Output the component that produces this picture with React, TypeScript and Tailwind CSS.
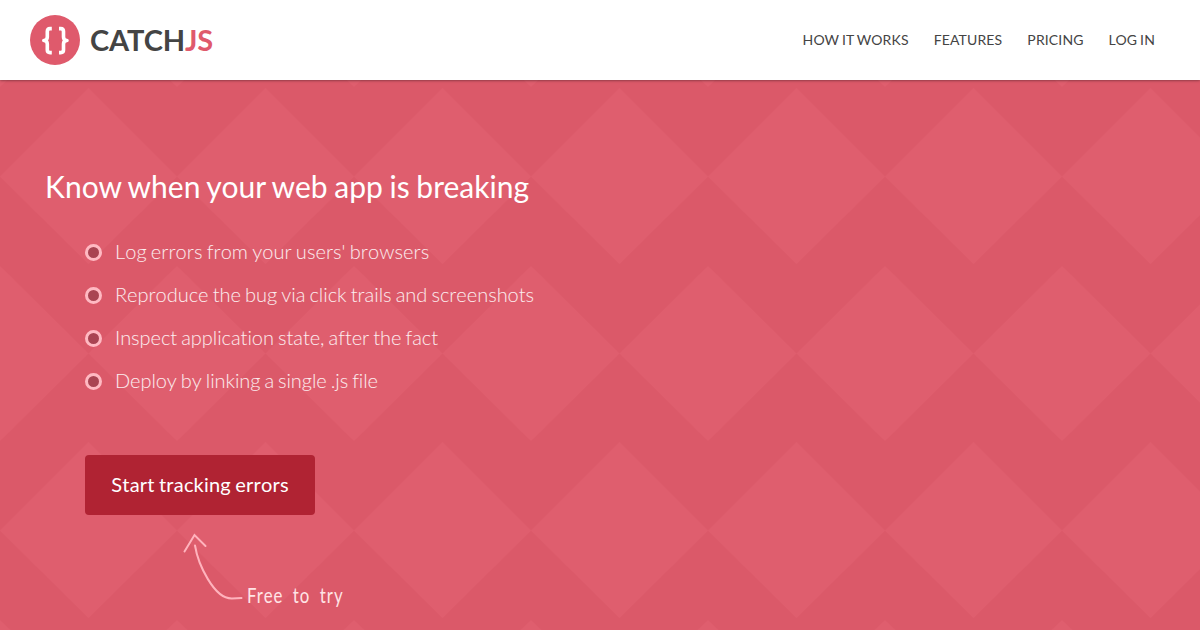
import React from 'react';

const navItems = ['How it works', 'Features', 'Pricing', 'Log in'];

const features = [
  { text: "Log errors from your users' browsers", tracking: 'tracking-[0.055px]' },
  { text: 'Reproduce the bug via click trails and screenshots', tracking: 'tracking-[-0.02px]' },
  { text: 'Inspect application state, after the fact', tracking: 'tracking-[-0.045px]' },
  { text: 'Deploy by linking a single .js file', tracking: 'tracking-[-0.075px]' },
];

function Logo() {
  return (
    <a className="flex items-center" href="#">
      <svg width="50" height="50" viewBox="0 0 50 50" aria-hidden="true">
        <circle cx="25" cy="25" r="25" fill="#df5a6c" />
        <g fill="none" stroke="#fff" strokeWidth="3.6" strokeLinejoin="round">
          <path d="M21.8 13.6H20Q17.3 13.6 17.3 16.5V22Q17.3 25.5 13.8 25.5Q17.3 25.5 17.3 29V35Q17.3 37.6 20 37.6H21.8" />
          <path d="M29 13.6H30.8Q33.5 13.6 33.5 16.5V22Q33.5 25.5 37 25.5Q33.5 25.5 33.5 29V35Q33.5 37.6 30.8 37.6H29" />
        </g>
      </svg>
      <span className="ml-2.5 pb-px text-[29px] leading-[49px] font-bold tracking-[-0.1px] text-[#444]">
        CATCH<span className="text-[#df5a6c]">JS</span>
      </span>
    </a>
  );
}

function Header() {
  return (
    <header className="relative z-10 flex h-20 items-center justify-between bg-white pr-[45px] pl-[30px] shadow-[0_0_3px_rgba(0,0,0,0.6)]">
      <Logo />
      <nav className="flex gap-[25px] tracking-[0.14px] [word-spacing:-0.8px]">
        {navItems.map((item) => (
          <a key={item} href="#" className="text-sm text-[#444] uppercase">
            {item}
          </a>
        ))}
      </nav>
    </header>
  );
}

function DiamondBackground() {
  return (
    <svg className="absolute inset-0 h-full w-full" aria-hidden="true">
      <defs>
        <pattern id="diamonds" width="177" height="354" patternUnits="userSpaceOnUse" y="8">
          <g fill="#df5e6e">
            <path d="M88.5 0L177 88.5L88.5 176L0 88.5Z" />
            <path d="M0 178L88.5 265.5L0 353L-88.5 265.5Z" />
            <path d="M177 178L265.5 265.5L177 353L88.5 265.5Z" />
          </g>
        </pattern>
      </defs>
      <rect width="100%" height="100%" fill="url(#diamonds)" />
    </svg>
  );
}

function Hero() {
  return (
    <section className="relative h-[550px] bg-[#db5969]">
      <DiamondBackground />
      <div className="relative pt-[84px] pl-[45px] text-white">
        <h1 className="text-[30px] leading-[44px] tracking-[0.03px] [font-variant-ligatures:none] [word-spacing:-1.1px]">
          Know when your web app is breaking
        </h1>
        <ul className="mt-[21px] ml-10 [font-kerning:none] [font-variant-ligatures:none] [word-spacing:-1.3px]">
          {features.map(({ text, tracking }) => (
            <li key={text} className={`flex h-[43px] items-center text-xl font-light text-white/90 ${tracking}`}>
              <span className="mt-[3px] mr-[13px] h-[17px] w-[17px] rounded-full border-[3px] border-[#ffb9c2] bg-[#a94452]" />
              {text}
            </li>
          ))}
        </ul>
        <a
          href="#"
          className="mt-[54px] ml-10 flex h-[60px] w-[230px] items-center justify-center rounded bg-[#b02333] pb-0.5 text-xl tracking-[0.19px] [font-kerning:none] [word-spacing:-1px]"
        >
          Start tracking errors
        </a>
        <div className="mt-[17px] ml-[137px] flex">
          <svg width="62" height="70" viewBox="0 0 62 70" fill="none" stroke="#ffb3bd" strokeWidth="2" strokeLinecap="round" aria-hidden="true">
            <path d="M2.5 19.5L12.5 3L23.5 14" />
            <path d="M13 13.5C16 32 32 67 50 66.5L59.5 66" />
          </svg>
          <span className="mt-[49px] ml-[3px] origin-left scale-x-[0.8] text-[21px] leading-7 tracking-[1.3px] [word-spacing:5px] whitespace-nowrap text-[#ffe4e6]">
            Free to try
          </span>
        </div>
      </div>
    </section>
  );
}

export default function App() {
  return (
    <div className="h-[630px] w-full overflow-hidden font-['Lato',sans-serif]">
      <Header />
      <Hero />
    </div>
  );
}
